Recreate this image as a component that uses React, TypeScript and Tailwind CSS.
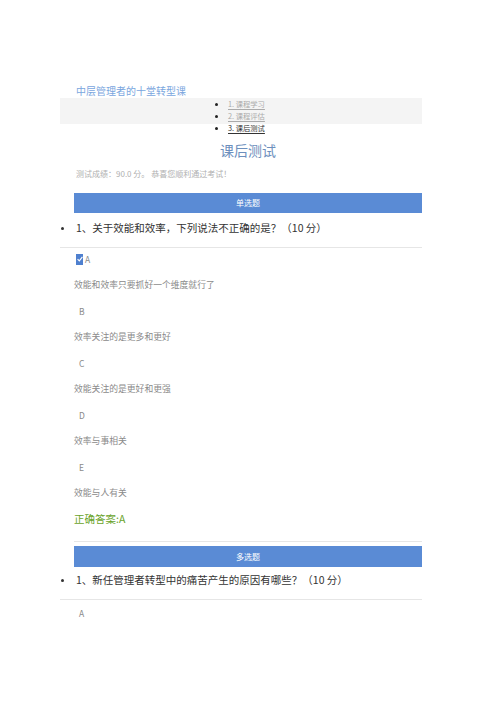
import React from "react";

const F = { fontFamily: '"Noto Sans CJK SC", "Noto Sans", sans-serif' };

function Opt({ letter, text, checked }: { letter: string; text: string; checked?: boolean }) {
  return (
    <div>
      <div className="h-[26px] flex items-center text-[8.5px] text-[#8a8a8a]">
        {checked ? (
          <span className="flex items-center">
            <span className="ml-[2px] w-[7px] h-[11px] bg-[#4f80cf] flex items-center justify-center">
              <svg width="6" height="6" viewBox="0 0 6 6">
                <path d="M0.6 3.2 L2.3 4.9 L5.4 0.8" stroke="#fff" strokeWidth="1.1" fill="none" />
              </svg>
            </span>
            <span className="ml-[2px]">{letter}</span>
          </span>
        ) : (
          <span className="ml-[5px]">{letter}</span>
        )}
      </div>
      <div className="h-[26px] flex items-center text-[8.8px] text-[#8a8a8a]">{text}</div>
    </div>
  );
}

export default function App() {
  return (
    <div className="w-[496px] h-[702px] bg-white overflow-hidden" style={F}>
      <div className="ml-[74px] w-[348px] pt-[83px]">
        <div className="pl-[2px] h-[15px] flex items-center text-[10px] text-[#7aa6de]">中层管理者的十堂转型课</div>
        <div className="-ml-[14px] w-[362px] h-[26px] bg-[#f4f4f4]">
          <ul className="pl-[155px]">
            {["1. 课程学习", "2. 课程评估", "3. 课后测试"].map((t, i) => (
              <li key={t} className="h-[12px] flex items-center">
                <span className="w-[3px] h-[3px] rounded-full bg-[#222]" />
                <span
                  className={
                    "ml-[10px] text-[7.3px] leading-[9px] underline underline-offset-2 " +
                    (i === 2 ? "text-[#333]" : "text-[#aaa]")
                  }
                >
                  {t}
                </span>
              </li>
            ))}
          </ul>
        </div>
        <div className="mt-[16px] h-[20px] flex items-center justify-center text-[14px] text-[#6d8fbd]">课后测试</div>
        <div className="mt-[5px] h-[18px] pl-[2px] flex items-center text-[8px] text-[#b0b0b0]">
          测试成绩：90.0 分。 恭喜您顺利通过考试！
        </div>
        <div className="mt-[10px] h-[20px] bg-[#5a8bd5] flex items-center justify-center text-[8px] text-white">单选题</div>
        <div className="-ml-[14px] h-[30px] flex items-center text-[10.5px] text-[#333]">
          <span className="w-[3px] h-[3px] rounded-full bg-[#333] ml-[1px]" />
          <span className="ml-[12px]">1、关于效能和效率，下列说法不正确的是？（10 分）</span>
        </div>
        <div className="-ml-[14px] w-[362px] h-px bg-[#e6e6e6] mt-[4px]" />
        <div className="-mt-[2px]">
          <Opt letter="A" text="效能和效率只要抓好一个维度就行了" checked />
          <Opt letter="B" text="效率关注的是更多和更好" />
          <Opt letter="C" text="效能关注的是更好和更强" />
          <Opt letter="D" text="效率与事相关" />
          <Opt letter="E" text="效能与人有关" />
          <div className="h-[26px] flex items-center text-[10.5px] text-[#6aa32a]">正确答案:A</div>
        </div>
        <div className="mt-[9px] h-px bg-[#e6e6e6]" />
        <div className="mt-[4px] h-[21px] bg-[#5a8bd5] flex items-center justify-center text-[8px] text-white">多选题</div>
        <div className="-ml-[14px] h-[26px] flex items-center text-[10.5px] text-[#333]">
          <span className="w-[3px] h-[3px] rounded-full bg-[#333] ml-[1px]" />
          <span className="ml-[12px]">1、新任管理者转型中的痛苦产生的原因有哪些？（10 分）</span>
        </div>
        <div className="-ml-[14px] w-[362px] h-px bg-[#e6e6e6] mt-[6px]" />
        <div className="h-[26px] flex items-center text-[8.5px] text-[#8a8a8a]">
          <span className="ml-[5px]">A</span>
        </div>
      </div>
    </div>
  );
}
